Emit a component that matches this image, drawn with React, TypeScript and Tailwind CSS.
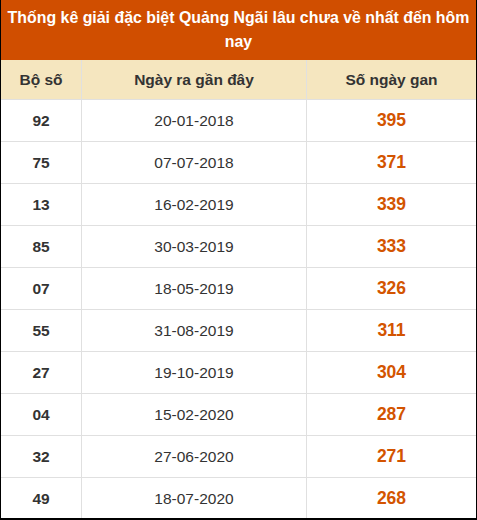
const rows = [
  { so: '92', ngay: '20-01-2018', gan: '395' },
  { so: '75', ngay: '07-07-2018', gan: '371' },
  { so: '13', ngay: '16-02-2019', gan: '339' },
  { so: '85', ngay: '30-03-2019', gan: '333' },
  { so: '07', ngay: '18-05-2019', gan: '326' },
  { so: '55', ngay: '31-08-2019', gan: '311' },
  { so: '27', ngay: '19-10-2019', gan: '304' },
  { so: '04', ngay: '15-02-2020', gan: '287' },
  { so: '32', ngay: '27-06-2020', gan: '271' },
  { so: '49', ngay: '18-07-2020', gan: '268' },
]

export default function App() {
  return (
    <div
      className="h-[520px] w-[477px] overflow-hidden border-b-2 border-l border-r border-black bg-white text-[#333]"
      style={{ fontFamily: '"Liberation Sans", Arial, sans-serif' }}
    >
      {/* Title */}
      <div className="flex h-[60px] items-start justify-center bg-[#d04e00] pt-[6px] text-center text-[15.9px] font-bold leading-[24px] text-white">
        Thống kê giải đặc biệt Quảng Ngãi lâu chưa về nhất đến hôm nay
      </div>

      {/* Column headers */}
      <div className="grid h-[40px] grid-cols-[81px_225px_1fr] border-b border-[#e0e0e0] bg-[#f5e6bf] text-[15.5px] font-bold">
        <div className="flex items-center justify-center border-r border-[#e0e0e0]">Bộ số</div>
        <div className="flex items-center justify-center border-r border-[#e0e0e0]">Ngày ra gần đây</div>
        <div className="flex items-center justify-center">Số ngày gan</div>
      </div>

      {/* Rows */}
      {rows.map((r) => (
        <div
          key={r.so}
          className="grid h-[42px] grid-cols-[81px_225px_1fr] border-b border-[#e0e0e0] text-[15.5px]"
        >
          <div className="flex items-center justify-center border-r border-[#e0e0e0] font-bold">{r.so}</div>
          <div className="flex items-center justify-center border-r border-[#e0e0e0]">{r.ngay}</div>
          <div className="flex items-center justify-center text-[17.5px] font-bold text-[#d35400]">{r.gan}</div>
        </div>
      ))}
    </div>
  )
}
